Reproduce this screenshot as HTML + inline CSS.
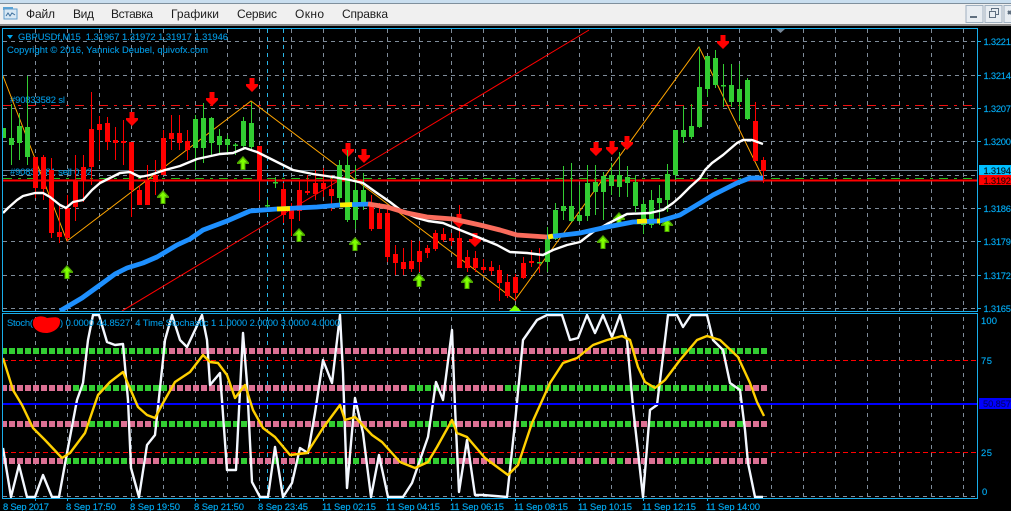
<!DOCTYPE html>
<html><head><meta charset="utf-8"><style>
html,body{margin:0;padding:0;background:#000;width:1011px;height:511px;overflow:hidden}
svg{display:block}
text{font-family:"Liberation Sans",sans-serif}
.p{font-size:9.4px;fill:#00aaf2;stroke:#00aaf2;stroke-width:.15px}
.k{font-size:9.4px;fill:#001820;stroke:#001820;stroke-width:.15px}
.m{font-size:12px;fill:#1c1c1c}
.t{font-size:9.4px;fill:#0098e0;stroke:#0098e0;stroke-width:.12px}
</style></head><body>
<svg width="1011" height="511" viewBox="0 0 1011 511" xmlns="http://www.w3.org/2000/svg">
<defs>
<clipPath id="a"><rect x="3" y="29" width="974" height="282"/></clipPath>
<clipPath id="b"><rect x="3" y="314" width="974" height="184"/></clipPath>
<path id="d" d="M-2.500 0H2.500V6H6V8L0 14L-6 8V6H-2.500Z" fill="#f00"/>
<g id="u"><path d="M-2.500 14H2.500V8H6V6.500L0 0L-6 6.500V8H-2.500Z" fill="#4da800"/><path d="M-1.500 13H1.500V6.500H4L0 2L-4 6.500H-1.500Z" fill="#7fff00"/></g>
</defs>
<rect width="1011" height="511" fill="#000"/>
<!-- menu -->
<rect width="1011" height="3" fill="#c9deef"/>
<rect y="3" width="1011" height="1" fill="#7f8f9c"/>
<rect y="4" width="1011" height="20" fill="#f0f0f0"/>
<rect y="24" width="1011" height="2" fill="#8a8a8a"/>
<rect x="3" y="7" width="10" height="3" fill="#5aa5d8"/>
<rect x="4" y="9" width="13" height="10" fill="#d8e8f4" stroke="#5f9ccc"/>
<path d="M6 16L8 13L10 16L12 13L15 15" fill="none" stroke="#3d6e9c"/>
<text class="m" x="26" y="18" textLength="29">Файл</text>
<text class="m" x="73" y="18" textLength="21">Вид</text>
<text class="m" x="111" y="18" textLength="42">Вставка</text>
<text class="m" x="171" y="18" textLength="48">Графики</text>
<text class="m" x="237" y="18" textLength="40">Сервис</text>
<text class="m" x="295" y="18" textLength="29">Окно</text>
<text class="m" x="342" y="18" textLength="46">Справка</text>
<rect x="966" y="5.500" width="17" height="17" fill="#e8edf2" stroke="#9fb0c0"/>
<rect x="970" y="16" width="7" height="2" fill="#5f6f80"/>
<rect x="985" y="5.500" width="17" height="17" fill="#e8edf2" stroke="#9fb0c0"/>
<path d="M991.500 10.500V8.500H998.500V14.500H995.500M989.500 11.500H995.500V17.500H989.500Z" fill="none" stroke="#5f6f80"/>
<rect x="1004" y="5.500" width="12" height="17" fill="#e8edf2" stroke="#9fb0c0"/>
<path d="M1008 11L1011 14M1011 11L1008 14" stroke="#5f6f80" stroke-width="2"/>

<!-- grid -->
<g stroke="#7f8c9a" stroke-dasharray="4 4" shape-rendering="crispEdges" fill="none">
<path clip-path="url(#a)" d="M3 41.500H977M3 75.500H977M3 108.500H977M3 141.500H977M3 175.500H977M3 208.500H977M3 241.500H977M3 275.500H977M3 308.500H977"/>
<path d="M35.500 29V497M67.500 29V497M99.500 29V497M131.500 29V497M163.500 29V497M195.500 29V497M227.500 29V497M259.500 29V497M291.500 29V497M323.500 29V497M355.500 29V497M387.500 29V497M419.500 29V497M451.500 29V497M483.500 29V497M515.500 29V497M547.500 29V497M579.500 29V497M611.500 29V497M643.500 29V497M675.500 29V497M707.500 29V497M739.500 29V497M771.500 29V497M803.500 29V497M835.500 29V497M867.500 29V497M899.500 29V497M931.500 29V497M963.500 29V497"/>
<path stroke="#29b6e8" d="M267.500 29V497M283.500 29V497"/>
<path d="M3 496.500H977"/>
</g>
<rect x="0" y="311" width="1011" height="3" fill="#000"/>
<!-- level lines -->
<g shape-rendering="crispEdges" fill="none">
<path d="M3 105.500H977" stroke="#f01010" stroke-dasharray="9 6 3 6"/>
<path d="M3 170.500H977" stroke="#6f8090"/>
<path d="M3 178.500H977" stroke="#20c020" stroke-dasharray="9 6 3 6"/>
<path d="M3 180.500H977" stroke="#ff0000" stroke-width="2"/>
</g>
<!-- labels behind -->
<text class="t" x="10" y="103" textLength="55">#90833582 sl</text>
<text class="t" x="10" y="175" textLength="82">#90833581 sell 0.02</text>

<g clip-path="url(#a)">
<!-- zigzag + trend -->
<path d="M3 76L67 241L251 101L515 300L699 47L763 178" fill="none" stroke="#ffa500"/>
<path d="M122 311L589 30" fill="none" stroke="#f00"/>
<!-- red arrows -->
<use href="#d" x="132" y="112"/><use href="#d" x="212" y="92"/><use href="#d" x="252" y="78"/>
<use href="#d" x="348" y="143"/><use href="#d" x="364" y="149"/><use href="#d" x="596" y="142"/>
<use href="#d" x="612" y="141"/><use href="#d" x="627" y="136"/><use href="#d" x="723" y="35"/>
<use href="#d" x="459" y="214"/><use href="#d" x="475" y="233"/>
<!-- green up arrows -->
<use href="#u" x="243" y="156"/><use href="#u" x="67" y="265"/><use href="#u" x="163" y="190"/>
<use href="#u" x="299" y="228"/><use href="#u" x="355" y="237"/><use href="#u" x="419" y="273"/>
<use href="#u" x="467" y="275"/><use href="#u" x="603" y="235"/><use href="#u" x="619" y="212"/>
<use href="#u" x="667" y="218"/>
<path d="M515 305L521 311H509Z" fill="#7fff00"/>
<!-- candles -->
<g shape-rendering="crispEdges" fill="none">
<path stroke="#f00" d="M35.500 157V198M43.500 155V200M51.500 158V238M59.500 204V243M67.500 195V241M75.500 155V221M83.500 155V202M91.500 92V185M99.500 116V160M107.500 117V150M115.500 127V160M123.500 120V165M131.500 142V217M139.500 185V205M147.500 165V205M155.500 160V195M163.500 130V175M171.500 115V150M179.500 115V150M187.500 130V160M259.500 146V200M283.500 183V223M291.500 203V236M299.500 180V221M307.500 175V195M315.500 170V200M323.500 168V197M331.500 175V211M371.500 195V231M379.500 203V229M387.500 205V262M395.500 245V275M403.500 248V275M411.500 240V272M419.500 241V272M427.500 245V258M435.500 230V251M443.500 228V242M451.500 233V246M459.500 205V268M467.500 250V272M475.500 251V272M483.500 259V273M491.500 261V275M499.500 265V301M507.500 274V298M515.500 274V301M523.500 257V279M531.500 250V267M539.500 248V273M755.500 102V161M763.500 157V183"/>
<path stroke="#f00" stroke-width="5" d="M35.500 157V188M43.500 157V189M51.500 170V233M59.500 232V237M67.500 208V238M75.500 180V207M83.500 167V180M91.500 129V167M99.500 124V130M107.500 123V142M115.500 140V143M123.500 141V143M131.500 142V190M139.500 190V205M147.500 180V205M155.500 175V182M163.500 138V175M171.500 133V139M179.500 133V143M187.500 141V150M259.500 146V180M283.500 189V215M291.500 208V219M299.500 190V211M307.500 191V193M315.500 183V194M323.500 183V189M331.500 189V196M371.500 203V229M379.500 213V229M387.500 213V257M395.500 254V263M403.500 262V269M411.500 261V269M419.500 251V262M427.500 248V253M435.500 233V249M443.500 234V240M451.500 238V241M459.500 238V268M467.500 257V268M475.500 258V268M483.500 267V270M491.500 267V271M499.500 270V283M507.500 282V296M515.500 277V293M523.500 263V278M531.500 261V263M755.500 121V161M763.500 160V171"/>
<path stroke="#32cd32" d="M11.500 104V165M19.500 113V160M27.500 76V165M195.500 115V170M203.500 103V163M211.500 117V155M219.500 129V155M227.500 135V155M235.500 143V155M243.500 117V150M251.500 102V150M267.500 200V210M275.500 177V188M339.500 160V205M347.500 150V222M355.500 165V229M363.500 173V210M547.500 227V272M555.500 203V240M563.500 166V220M571.500 163V222M579.500 185V222M587.500 165V221M595.500 165V215M603.500 172V220M611.500 163V195M619.500 152V197M627.500 166V197M635.500 175V212M643.500 200V234M651.500 190V228M659.500 185V225M667.500 164V212M675.500 130V180M683.500 106V143M691.500 104V139M699.500 47V128M707.500 56V97M715.500 50V88M723.500 64V107M731.500 64V107M739.500 64V121M747.500 78V120"/>
<path stroke="#32cd32" stroke-width="5" d="M3.500 128V138M11.500 138V145M19.500 126V143M27.500 127V157M195.500 119V148M203.500 118V148M211.500 118V143M219.500 136V145M227.500 139V145M235.500 144.500V146M243.500 121V146M251.500 123V147M267.500 205V206.500M275.500 182V183.500M339.500 165V198M347.500 165V220M355.500 190V220M363.500 190V205M539.500 262V263.500M547.500 238V262M555.500 210V239M563.500 206V211M571.500 206V221M579.500 215V221M587.500 183V216M595.500 182V192M603.500 176V192M611.500 175V186M619.500 175V187M627.500 177V183M635.500 182V206M643.500 204V225M651.500 200V225M659.500 198V203M667.500 174V200M675.500 130V175M683.500 130V137M691.500 126V137M699.500 87V127M707.500 56V89M715.500 58V85M723.500 85V86.500M731.500 85V102M739.500 89V102M747.500 80V119"/>
</g>
<!-- MAs -->
<g fill="none" stroke-linejoin="round">
<path stroke="#fff" stroke-width="2.400" d="M3 213L8 208L17 200L23 196L35 193L43 193L50 197L60 205L66 208L73 202L83 200L92 190L100 183L110 178L120 173L130 172L140 177L150 175L165 170L180 166L197 159L220 154L233 153L245 148L257 152L267 157L283 165L293 170L313 174L333 177L350 180L363 183L377 193L390 202L403 212L417 218L428 221L443 223L460 230L480 238L497 245L510 252L527 253L543 255L553 250L567 245L580 242L593 232L607 224L627 214L650 213L663 210L673 203L680 197L690 187L700 178L705 170L712 163L723 155L737 143L743 140L752 140L763 144"/>
<path stroke="#1e90ff" stroke-width="4.800" d="M60 311L82 298L100 285L115 274L127 268L143 263L157 257L177 245L190 239L203 230L227 221L250 211L277 209L317 207L340 205L371 204"/>
<path stroke="#fa6c5c" stroke-width="4.800" d="M368 204L387 207L407 213L427 217L453 219L480 225L500 230L517 235L547 237"/>
<path stroke="#1e90ff" stroke-width="4.800" d="M547 237L580 233L607 227L633 222L660 221L680 215L700 203L713 195L737 183L750 178L763 178"/>
<path stroke="#ffee00" stroke-width="4.800" d="M277 209L290 208.500M340 205L352 204.500M548 237L553 236M637 221.500L647 221M657 221L660 221"/>
</g>
</g>

<!-- indicator -->
<g clip-path="url(#b)">
<path d="M3 360.500H977M3 452.500H977" stroke="#f00" stroke-dasharray="5 3" shape-rendering="crispEdges"/>
<g stroke-width="6" stroke-dasharray="6 2" fill="none" shape-rendering="crispEdges">
<path stroke="#32cd32" d="M1 351H167M673 351H767M73 388H167M409 388H439M505 388H743M89 424H119M153 424H247M329 424H343M409 424H455M521 424H631M649 424H719M737 424H743M65 461H127M161 461H207M241 461H247M273 461H279M297 461H343M353 461H359M417 461H455M505 461H567M585 461H591M601 461H607M617 461H623M665 461H711"/>
<path stroke="#db7093" d="M169 351H671M1 388H71M169 388H407M441 388H503M745 388H767M1 424H87M121 424H151M249 424H327M345 424H407M457 424H519M633 424H647M721 424H735M745 424H767M1 461H63M129 461H159M209 461H239M249 461H271M281 461H295M345 461H351M361 461H415M457 461H503M569 461H583M593 461H599M609 461H615M625 461H663M713 461H767"/>
</g>
<path fill="none" stroke="#f4f8ff" stroke-width="2.400" stroke-linejoin="round" d="M3 448L11 497L19 465L27 497L35 497L43 475L52 497L59 497L67 453L77 400L83 383L88 340L93 315L99 315L107 342L115 345L123 344L128 400L131 468L139 497L147 445L155 435L163 360L165 340L172 315L180 340L187 347L195 330L202 315L207 340L210 385L220 373L227 470L236 470L239 410L243 333L247 383L252 482L260 497L268 497L275 447L283 497L292 483L300 448L308 453L315 413L323 360L332 383L340 315L343 373L347 488L355 398L363 433L371 497L379 455L388 497L403 497L412 483L428 437L436 382L443 400L452 330L455 407L459 492L467 440L475 495L483 495L507 497L515 423L523 340L537 320L547 315L562 315L570 340L578 338L587 315L595 333L603 315L612 337L620 315L627 340L633 407L643 497L650 410L657 405L665 340L668 315L677 315L683 327L691 315L707 315L713 340L723 350L730 383L740 390L745 430L748 463L755 497L763 497"/>
<path d="M3 404H977" stroke="#0000ff" stroke-width="2" shape-rendering="crispEdges"/>
<path fill="none" stroke="#ffd000" stroke-width="2.400" stroke-linejoin="round" d="M3 358L13 390L22 405L33 428L45 440L62 458L70 453L85 433L98 395L110 382L123 372L138 407L147 415L155 418L163 403L175 382L190 372L203 355L210 362L218 363L227 375L235 398L245 385L253 410L263 428L275 437L290 455L307 453L323 428L340 405L345 420L355 417L372 435L382 442L400 462L415 468L428 462L437 447L452 420L457 433L467 437L485 458L508 475L518 465L532 423L550 383L563 363L577 358L593 345L607 340L622 336L630 340L638 367L645 382L655 388L665 380L680 360L697 340L707 336L720 340L738 357L750 383L757 402L764 416"/>
</g>
<path d="M60 322C61 316 54 317 47 318C42 315 33 316 33 322C32 327 37 333 46 333C53 333 60 328 60 322Z" fill="#f00"/>

<!-- frames -->
<g fill="none" stroke="#19aeea" shape-rendering="crispEdges">
<path d="M2.500 28.500H977.500V311.500H2.500Z"/>
<path d="M2.500 313.500H977.500V498.500H2.500Z"/>
<path d="M35.500 498V501M67.500 498V501M131.500 498V501M195.500 498V501M259.500 498V501M323.500 498V501M387.500 498V501M451.500 498V501M515.500 498V501M579.500 498V501M643.500 498V501M707.500 498V501M977 41.500H981M977 75.500H981M977 108.500H981M977 141.500H981M977 208.500H981M977 241.500H981M977 275.500H981M977 308.500H981"/>
</g>
<path d="M776 29H785L780.500 33Z" fill="#778899"/>

<!-- top labels -->
<path d="M7 35H13L10 39Z" fill="#00a8f0"/>
<text class="t" x="18" y="40" textLength="210" xml:space="preserve">GBPUSDf,M15  1.31967 1.31972 1.31917 1.31946</text>
<text class="t" x="7" y="53" textLength="201">Copyright © 2016, Yannick Deubel, quivofx.com</text>
<text class="t" x="7" y="326" textLength="26">Stoch(</text>
<text class="t" x="60" y="326" textLength="280" xml:space="preserve">) 0.0000 44.8527  4 Time Stochastic 1 1.0000 2.0000 3.0000 4.0000</text>

<!-- price axis -->
<text class="p" x="983.500" y="45" textLength="27.500">1.3221</text>
<text class="p" x="983.500" y="79" textLength="27.500">1.3214</text>
<text class="p" x="983.500" y="112" textLength="27.500">1.3207</text>
<text class="p" x="983.500" y="145" textLength="27.500">1.3200</text>
<text class="p" x="983.500" y="212" textLength="27.500">1.3186</text>
<text class="p" x="983.500" y="245" textLength="27.500">1.3179</text>
<text class="p" x="983.500" y="279" textLength="27.500">1.3172</text>
<text class="p" x="983.500" y="312" textLength="27.500">1.3165</text>
<rect x="979" y="165" width="32" height="10" fill="#00bfff"/>
<text class="k" x="983.500" y="174" textLength="27.500">1.3194</text>
<rect x="979" y="175" width="32" height="10" fill="#f00"/>
<text class="k" x="983.500" y="184" textLength="27.500" style="fill:#300000;stroke:#300000">1.3192</text>
<text class="p" x="981" y="324" textLength="16">100</text>
<text class="p" x="981" y="364" textLength="11">75</text>
<rect x="979" y="398" width="32" height="11" fill="#0000ff"/>
<text class="k" x="983" y="407" textLength="28" style="fill:#000070;stroke:#000070">50.857</text>
<text class="p" x="981" y="456" textLength="11">25</text>
<text class="p" x="982" y="495" textLength="6">0</text>

<!-- time axis -->
<text class="p" x="3" y="510" textLength="46">8 Sep 2017</text>
<text class="p" x="66" y="510" textLength="50">8 Sep 17:50</text>
<text class="p" x="130" y="510" textLength="50">8 Sep 19:50</text>
<text class="p" x="194" y="510" textLength="50">8 Sep 21:50</text>
<text class="p" x="258" y="510" textLength="50">8 Sep 23:45</text>
<text class="p" x="322" y="510" textLength="54">11 Sep 02:15</text>
<text class="p" x="386" y="510" textLength="54">11 Sep 04:15</text>
<text class="p" x="450" y="510" textLength="54">11 Sep 06:15</text>
<text class="p" x="514" y="510" textLength="54">11 Sep 08:15</text>
<text class="p" x="578" y="510" textLength="54">11 Sep 10:15</text>
<text class="p" x="642" y="510" textLength="54">11 Sep 12:15</text>
<text class="p" x="706" y="510" textLength="54">11 Sep 14:00</text>
</svg>
</body></html>
